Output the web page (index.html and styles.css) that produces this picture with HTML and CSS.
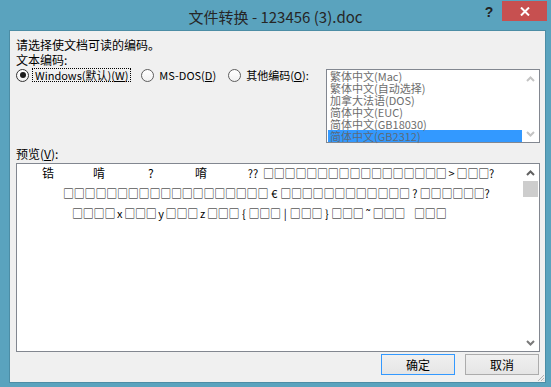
FILE: index.html
```html
<!DOCTYPE html>
<html lang="zh-CN">
<head>
    <meta charset="UTF-8">
    <title>文件转换 - 123456 (3).doc</title>
    <link rel="stylesheet" href="styles.css">
</head>
<body>
    <div class="window">
        <div class="titlebar">
            <div class="title">文件转换 - 123456 (3).doc</div>
            <div class="controls">
                <div class="help">?</div>
                <div class="close">
                    <svg width="10" height="9" viewBox="0 0 10 9">
                        <path d="M1 0.5 L9 8.5 M9 0.5 L1 8.5" stroke="#fff" stroke-width="2" fill="none"/>
                    </svg>
                </div>
            </div>
        </div>

        <div class="client">
            <p class="line">请选择使文档可读的编码。</p>
            <p class="line">文本编码:</p>

            <div class="enc-row">
                <div class="radios">
                    <div class="radio">
                        <span class="mark on"></span>
                        <span class="label focus">Windows(默认)(<u>W</u>)</span>
                    </div>
                    <div class="radio">
                        <span class="mark"></span>
                        <span class="label">MS-DOS(<u>D</u>)</span>
                    </div>
                    <div class="radio">
                        <span class="mark"></span>
                        <span class="label">其他编码(<u>O</u>):</span>
                    </div>
                </div>

                <div class="listbox">
                    <ul class="list">
                        <li>繁体中文(Mac)</li>
                        <li>繁体中文(自动选择)</li>
                        <li>加拿大法语(DOS)</li>
                        <li>简体中文(EUC)</li>
                        <li>简体中文(GB18030)</li>
                        <li class="sel">简体中文(GB2312)</li>
                    </ul>
                    <div class="vscroll">
                        <div class="arrow">
                            <svg width="9" height="6" viewBox="0 0 9 6"><path d="M1 5 L4.5 1.5 L8 5" stroke="#c4c4c4" stroke-width="2" fill="none"/></svg>
                        </div>
                        <div class="arrow">
                            <svg width="9" height="6" viewBox="0 0 9 6"><path d="M1 1 L4.5 4.5 L8 1" stroke="#c4c4c4" stroke-width="2" fill="none"/></svg>
                        </div>
                    </div>
                </div>
            </div>

            <p class="line preview-label">预览(<u>V</u>):</p>

            <div class="preview">
                <div class="pv-text">
                    <div class="pv-line cols">
                        <span class="c1">锆</span><span class="c2">啃</span><span class="c3">?</span><span class="c4">唷</span><span class="boxes"><span class="s20">??</span>□□□□□□□□□□□□□□□□□<span class="s10">&gt;</span>□□□?</span>
                    </div>
                    <div class="pv-line indent2"><span class="boxes">□□□□□□□□□□□□□□□□□□□<span class="s12">€</span>□□□□□□□□□□□□<span class="s10">?</span>□□□□□□?</span></div>
                    <div class="pv-line indent3"><span class="boxes">□□□□<span class="s9">x</span>□□□<span class="s9">y</span>□□□<span class="s9">z</span>□□□<span class="s9">{</span>□□□<span class="s9">|</span>□□□<span class="s9">}</span>□□□<span class="s9">˜</span>□□□<span class="s9"> </span>□□□</span></div>
                </div>
                <div class="vscroll">
                    <div class="arrow">
                        <svg width="9" height="6" viewBox="0 0 9 6"><path d="M1 5 L4.5 1.5 L8 5" stroke="#606060" stroke-width="2" fill="none"/></svg>
                    </div>
                    <div class="thumb"></div>
                    <div class="track"></div>
                    <div class="arrow">
                        <svg width="9" height="6" viewBox="0 0 9 6"><path d="M1 1 L4.5 4.5 L8 1" stroke="#7a7a7a" stroke-width="2" fill="none"/></svg>
                    </div>
                </div>
            </div>

            <div class="buttons">
                <button class="btn default">确定</button>
                <button class="btn">取消</button>
            </div>

            <svg class="grip" width="8" height="8" viewBox="0 0 8 8">
                <path d="M7 1 L1 7 M7 4 L4 7 M7 6.5 L6.5 7" stroke="#b4b4b4" stroke-width="1" fill="none"/>
            </svg>
        </div>
    </div>
</body>
</html>
```

FILE: styles.css
```css
* {
    box-sizing: border-box;
}

body {
    margin: 0;
    font-family: "Noto Sans CJK SC", "Noto Sans", sans-serif;
    font-size: 12px;
    color: #000;
    background-color: #5aa3be;
}

.window {
    width: 551px;
    height: 387px;
    background-color: #5aa3be;
    overflow: hidden;
}

/* title bar */
.titlebar {
    height: 30px;
    display: grid;
    grid-template-columns: 1fr auto 1fr;
}

.title {
    grid-column: 2;
    padding-top: 7px;
    font-size: 15px;
    line-height: 20px;
    color: #262626;
    white-space: nowrap;
}

.controls {
    grid-column: 3;
    justify-self: end;
    display: flex;
    margin-right: 4px;
    padding-top: 1px;
}

.help {
    width: 26px;
    height: 20px;
    padding-top: 1px;
    text-align: center;
    font-family: "Liberation Sans", sans-serif;
    font-weight: bold;
    font-size: 14px;
    line-height: 20px;
    color: #222;
}

.close {
    width: 45px;
    height: 20px;
    display: flex;
    justify-content: center;
    align-items: center;
    background-color: #c75050;
}

/* client area */
.client {
    position: relative;
    margin-left: 9px;
    width: 537px;
    height: 353px;
    padding: 6px 5px 0 6px;
    background-color: #f0f0f0;
    border: 1px solid #4c8da5;
}

.line {
    margin: 0;
    line-height: 15px;
    white-space: nowrap;
}

.enc-row {
    display: flex;
    align-items: flex-start;
    margin-top: 2px;
}

.radios {
    display: flex;
    gap: 10px;
    margin-top: -1px;
    font-size: 11px;
    line-height: 12px;
}

.radio {
    display: flex;
    align-items: center;
    gap: 3px;
    white-space: nowrap;
}

.mark {
    width: 13px;
    height: 13px;
    display: flex;
    justify-content: center;
    align-items: center;
    border: 1px solid #5e5e5e;
    border-radius: 50%;
    background: linear-gradient(#ffffff, #f1f1f1);
}

.mark.on {
    border-color: #333;
}

.mark.on::after {
    content: "";
    width: 6px;
    height: 6px;
    border-radius: 50%;
    background-color: #1b1b1b;
}

.label {
    padding: 0 1px;
    border: 1px solid transparent;
}

.label.focus {
    padding: 0 2px;
    border: 1px dotted #000;
}

/* listbox */
.listbox {
    flex-shrink: 0;
    margin-left: auto;
    width: 214px;
    height: 74px;
    display: flex;
    padding-left: 1px;
    background-color: #fff;
    border: 1px solid #828790;
}

.list {
    flex: 1;
    margin: 0;
    padding: 0;
    list-style: none;
    font-size: 11px;
    color: #6d6d6d;
}

.list li {
    height: 12px;
    line-height: 12px;
    padding-left: 2px;
    white-space: nowrap;
}

.list li.sel {
    background-color: #3399ff;
    color: #5c6a7a;
}

.vscroll {
    width: 17px;
    display: flex;
    flex-direction: column;
    justify-content: space-between;
}

.arrow {
    height: 17px;
    display: flex;
    justify-content: center;
    align-items: center;
}

.thumb {
    height: 16px;
    margin: 0 1px;
    background-color: #cdcdcd;
}

.track {
    flex: 1;
}

/* preview */
.preview-label {
    margin-top: 3px;
}

.preview {
    margin-top: 2px;
    height: 189px;
    display: flex;
    background-color: #fff;
    border: 1px solid #828790;
}

.pv-text {
    flex: 1;
    margin-top: -1px;
}

.pv-line {
    height: 20px;
    line-height: 20px;
    white-space: pre;
}

.cols {
    display: flex;
    padding-left: 25px;
}

.c1, .c2, .c3, .c4 {
    display: inline-block;
}

.c1 { width: 51px; }
.c2 { width: 55px; }
.c3 { width: 47px; }
.c4 { width: 48px; }

.boxes {
    font-size: 11px;
    letter-spacing: -0.2px;
}

.s9, .s10, .s12, .s20 {
    display: inline-block;
    text-align: center;
    letter-spacing: 0;
}

.s9 { width: 9px; }
.s10 { width: 10px; }
.s12 { width: 12px; }
.s20 { width: 20px; }

.indent2 {
    padding-left: 46px;
}

.indent3 {
    padding-left: 55px;
}

/* buttons */
.buttons {
    display: flex;
    justify-content: flex-end;
    gap: 10px;
    margin-top: 2px;
    margin-right: 1px;
}

.btn {
    width: 74px;
    height: 21px;
    padding: 0;
    font-family: "Noto Sans CJK SC", sans-serif;
    font-size: 12px;
    color: #000;
    background: linear-gradient(#f0f0f0, #e5e5e5);
    border: 1px solid #acacac;
}

.btn.default {
    border-color: #3399ff;
}

.grip {
    position: absolute;
    right: 0;
    bottom: 0;
}
```
